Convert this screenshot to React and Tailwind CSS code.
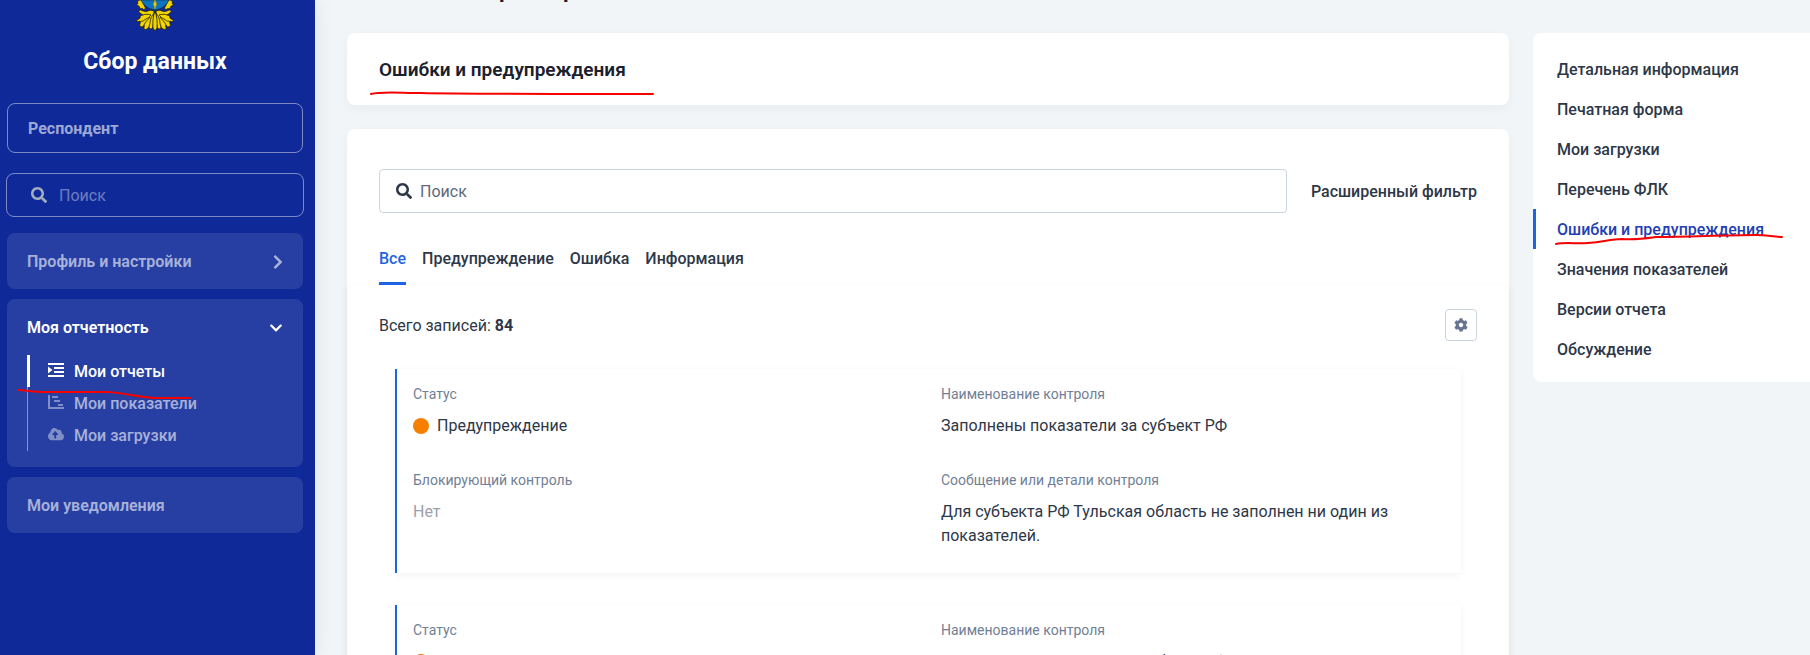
import React, { useState } from "react";
import { FaSearch, FaChevronRight, FaChevronDown, FaCog, FaCloudUploadAlt } from "react-icons/fa";

const SIDE_LINKS = [
  "Детальная информация",
  "Печатная форма",
  "Мои загрузки",
  "Перечень ФЛК",
  "Ошибки и предупреждения",
  "Значения показателей",
  "Версии отчета",
  "Обсуждение",
];

const TABS = ["Все", "Предупреждение", "Ошибка", "Информация"];

const RECORDS = [1, 2].map((id) => ({
  id,
  status: "Предупреждение",
  control: "Заполнены показатели за субъект РФ",
  blocking: "Нет",
  message: "Для субъекта РФ Тульская область не заполнен ни один из показателей.",
}));

function Mark({ className, viewBox, d }) {
  return (
    <svg aria-hidden="true" viewBox={viewBox} className={`absolute pointer-events-none z-10 ${className}`} fill="none" stroke="#f60000" strokeWidth="2" strokeLinecap="round" strokeLinejoin="round">
      <path d={d} />
    </svg>
  );
}

function Emblem() {
  const half = (
    <g fill="#f2d500" stroke="#1c1a08" strokeWidth="0.8">
      <path d="M4 0C2 0 1 2 2 3.500 0 4 1 6 3 6c0 2 2 3 3.500 2.500C7 10 9 10 9.500 8L7 3 6 0z" />
      <path d="M18 11c-3-1-4-1-6 0-3 1-5 0-7-1-2 0-3 2-1 3 1 1 2 1 3 2-2 0-3 1-3 3-1 1-3 2-4 3 1 1 3 1 4 0 1 1 0 2 0 3-1 1 0 3 2 3 1 0 1-1 2-2 1 2-1 3 0 4 2 1 4 0 5-2 2-4 3-9 5-12z" />
      <path d="M18 13c-2 3-4 6-4 10 0 2-2 4 0 6 2 0 3-1 3-3 1-4 1-8 1-13z" />
      <path d="M7 15c2-1 5-1 8 0M5 21c2 1 3-1 5-2s4-2 5-4M8 25c1-3 4-5 6-8" fill="none" />
    </g>
  );
  return (
    <svg aria-hidden="true" viewBox="0 0 38 32" className="w-[38px] h-8">
      {half}
      <g transform="translate(38 0) scale(-1 1)">{half}</g>
      <path d="M5 0c2 5 7 9 14 10 7-1 12-5 14-10z" fill="#0c73c2" stroke="#1c1a08" strokeWidth="0.5" />
      <path d="M19 11c-2 5-2.500 11-2 17l2 3 2-3c.5-6 0-12-2-17z" fill="#f2d500" stroke="#1c1a08" strokeWidth="0.8" />
      <path d="M19 0l-1.500 4L19 9l1.500-5z" fill="#f2d500" stroke="#b59a00" strokeWidth="0.7" />
    </svg>
  );
}

function ReportsIcon() {
  return (
    <svg aria-hidden="true" viewBox="0 0 16 14" className="w-4 h-3.5" fill="currentColor">
      <path d="M0 0h16v2H0zM6 4h10v2H6zM6 8h10v2H6zM0 12h16v2H0zM0 3.500L4.500 7 0 10.500z" />
    </svg>
  );
}

function GanttIcon() {
  return (
    <svg aria-hidden="true" viewBox="0 0 16 14" className="w-4 h-3.5" fill="currentColor">
      <path d="M0 0h2v12h14v2H0zM4 1h6v2H4zM6 5h6v2H6zM10 9h5v2h-5z" />
    </svg>
  );
}

const REPORT_LINKS = [
  { label: "Мои отчеты", icon: <ReportsIcon /> },
  { label: "Мои показатели", icon: <GanttIcon /> },
  { label: "Мои загрузки", icon: <FaCloudUploadAlt className="w-4 h-3.5" preserveAspectRatio="none" /> },
];

function Sidebar() {
  return (
    <aside className="relative w-[315px] shrink-0 bg-[#0f2a98] px-[7px] pr-3 text-white/60 shadow-[0_0_20px_rgba(0,0,0,0.08)]">
      <div className="flex flex-col items-center pr-[30px] pl-[30px]">
        <Emblem />
        <div className="mt-3 pt-0.5 text-[23px] leading-8 font-bold text-white">Сбор данных</div>
      </div>

      <button className="mt-[25px] block w-full h-[50px] rounded-lg border border-white/45 px-5 pt-0.5 text-left text-base font-bold">
        Респондент
      </button>

      <label className="-mx-px mt-5 flex items-center h-11 rounded-lg border border-white/45 px-6">
        <FaSearch className="w-4 h-4 shrink-0 text-[#a0aec0]" />
        <input type="text" aria-label="Поиск по меню" placeholder="Поиск" className="ml-3 pt-0.5 w-full min-w-0 bg-transparent text-base text-white outline-none placeholder:text-white/40" />
      </label>

      <nav className="mt-4 flex flex-col gap-2.5">
        <button className="flex items-center justify-between h-14 rounded-lg bg-white/10 px-5 pt-0.5 text-base font-semibold">
          Профиль и настройки
          <FaChevronRight className="w-2.5 h-4" />
        </button>

        <div className="rounded-lg bg-white/10 px-5 pb-4">
          <button className="flex w-full items-center justify-between h-14 pt-0.5 text-base font-semibold text-white">
            Моя отчетность
            <FaChevronDown className="w-3.5 h-3.5" />
          </button>
          <ul className="relative">
            {REPORT_LINKS.map((l, i) => (
              <li key={l.label} className={`flex items-center h-8 pt-0.5 ${i === 0 ? "border-l-3 border-white pl-[18px] text-white" : "border-l border-white/45 pl-5"}`}>
                <a href="#" className="flex items-center gap-2.5 text-base font-medium">
                  <span className={i === 0 ? "pb-1" : "pb-1 opacity-70"}>{l.icon}</span>
                  {l.label}
                </a>
              </li>
            ))}
            <Mark className="-left-2.5 top-8 w-[174px] h-4" viewBox="0 0 174 16" d="M1 3c8 0 14 2 24 2h66c16 1 30 5 46 6h36" />
          </ul>
        </div>

        <button className="flex items-center h-14 rounded-lg bg-white/10 px-5 pt-0.5 text-base font-semibold">Мои уведомления</button>
      </nav>
    </aside>
  );
}

function Field({ label, children }) {
  return (
    <div>
      <dt className="text-sm leading-[22px] text-[#718096]">{label}</dt>
      <dd className="mt-[9px] text-base leading-6">{children}</dd>
    </div>
  );
}

function RecordCard({ record }) {
  return (
    <dl className="grid grid-cols-2 gap-x-2 gap-y-[31px] border-l-2 border-[#1c64e4] pt-3.5 pl-4 pb-[25px] shadow-[0_2px_8px_rgba(0,0,0,0.05)]">
      <Field label="Статус">
        <span className="flex items-center gap-2">
          <span className="w-4 h-4 rounded-full bg-[#f77f00]" />
          {record.status}
        </span>
      </Field>
      <Field label="Наименование контроля">{record.control}</Field>
      <Field label="Блокирующий контроль">
        <span className="text-[#9ca0ab]">{record.blocking}</span>
      </Field>
      <div className="pr-16">
        <Field label="Сообщение или детали контроля">{record.message}</Field>
      </div>
    </dl>
  );
}

export default function App() {
  const [tab, setTab] = useState("Все");

  return (
    <div className="flex h-screen overflow-hidden bg-[#f1f5f8] font-['Roboto',sans-serif] text-[#2d3748]">
      <Sidebar />

      <main className="flex-1 min-w-0 pl-8">
        <h1 className="-mt-7 h-9 text-[22px] leading-9 font-bold text-[#1a202c]">Показатели параметров</h1>

        <section className="relative mt-[25px] flex items-center h-[72px] rounded-lg bg-white px-8 pt-0.5 shadow-[0_4px_12px_rgba(0,0,0,0.04)]">
          <h2 className="text-[19px] leading-7 font-semibold text-[#1a202c]">Ошибки и предупреждения</h2>
          <Mark className="left-[22px] top-[56px] w-[286px] h-2" viewBox="0 0 286 8" d="M2 5c10-3 30-1 50-1 40 1 90 1 232 1" />
        </section>

        <section className="mt-6 rounded-lg bg-white shadow-[0_4px_12px_rgba(0,0,0,0.04)]">
          <div className="flex items-center gap-6 px-8 pt-10">
            <label className="flex flex-1 items-center h-11 rounded border border-[#cbd5e0] px-4">
              <FaSearch className="w-4 h-4 shrink-0" />
              <input type="text" aria-label="Поиск" placeholder="Поиск" className="ml-2 pt-0.5 w-full min-w-0 text-base outline-none placeholder:text-[#5f6878]" />
            </label>
            <button className="pt-0.5 text-base font-medium">Расширенный фильтр</button>
          </div>

          <div role="tablist" className="mt-6 flex gap-4 px-8">
            {TABS.map((t) => (
              <button
                key={t}
                role="tab"
                aria-selected={tab === t}
                onClick={() => setTab(t)}
                className={`h-12 border-b-3 pb-0.5 text-base font-medium ${tab === t ? "border-[#1c64e4] text-[#1c64e4]" : "border-transparent"}`}
              >
                {t}
              </button>
            ))}
          </div>

          <div className="rounded-lg px-8 pt-6 pb-8 shadow-[0_2px_8px_rgba(0,0,0,0.05)]">
            <div className="flex items-center justify-between">
              <p className="pt-0.5 text-base">
                Всего записей: <b>84</b>
              </p>
              <button aria-label="Настройки" className="flex items-center justify-center w-8 h-8 rounded border border-[#cbd5e0] text-[#667592]">
                <FaCog className="w-3.5 h-3.5" />
              </button>
            </div>
            <div className="mt-7 flex flex-col gap-8 px-4">
              {RECORDS.map((r) => (
                <RecordCard key={r.id} record={r} />
              ))}
            </div>
          </div>
        </section>
      </main>

      <nav className="relative ml-6 mt-[33px] w-[277px] shrink-0 self-start rounded-l-lg bg-white pt-4 pb-[13px]">
        {SIDE_LINKS.map((l) => (
          <a
            key={l}
            href="#"
            className={`flex items-center h-10 border-l-3 pt-0.5 pl-[21px] text-base font-medium ${l === "Ошибки и предупреждения" ? "border-[#1c64e4] text-[#2340b4]" : "border-transparent"}`}
          >
            {l}
          </a>
        ))}
        <Mark className="left-[21px] top-[201px] w-[230px] h-3" viewBox="0 0 230 12" d="M2 10c10-2 20 0 32-1 16-1 22-4 34-4 14 1 20 0 34-2 30 0 70-2 100-2 10 0 18 2 26 2" />
      </nav>
    </div>
  );
}
